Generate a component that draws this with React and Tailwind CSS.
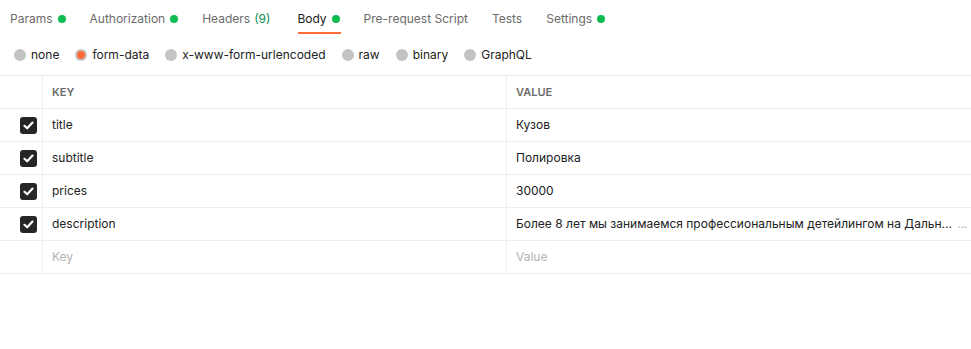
import React from 'react';

const tabs = [
    { label: 'Params', dot: true },
    { label: 'Authorization', dot: true },
    { label: 'Headers', count: '(9)' },
    { label: 'Body', dot: true, active: true },
    { label: 'Pre-request Script' },
    { label: 'Tests' },
    { label: 'Settings', dot: true },
];

const modes = ['none', 'form-data', 'x-www-form-urlencoded', 'raw', 'binary', 'GraphQL'];

const rows = [
    { key: 'title', value: 'Кузов' },
    { key: 'subtitle', value: 'Полировка' },
    { key: 'prices', value: '30000' },
    { key: 'description', value: 'Более 8 лет мы занимаемся профессиональным детейлингом на Дальн...', more: true },
];

const Check = () => (
    <div className="w-[17px] h-[17px] rounded-[3px] bg-[#262626] flex items-center justify-center">
        <svg width="11" height="9" viewBox="0 0 11 9" fill="none">
            <path d="M1.5 4.8 L4.2 7.3 L9.5 1.6" stroke="white" strokeWidth="2.2" strokeLinecap="round" strokeLinejoin="round" />
        </svg>
    </div>
);

const App = () => {
    return (
        <div className="w-[971px] h-[349px] bg-white text-[12px] text-[#212121] overflow-hidden" style={{ fontFamily: 'Inter, "Noto Sans", sans-serif' }}>
            {/* Tabs */}
            <div className="relative flex items-center h-[34px] pl-[10px] gap-[24px]">
                {tabs.map(t => (
                    <div key={t.label} className={`flex items-center gap-[5px] pt-[3px] leading-none ${t.count ? 'mr-[3px]' : ''}`}>
                        <span className={t.active ? 'text-[#212121]' : 'text-[#6b6b6b]'}>{t.label}</span>
                        {t.count && <span className="text-[#0a8f55] -ml-[1px]">{t.count}</span>}
                        {t.dot && <span className="w-[8px] h-[8px] rounded-full bg-[#0cbb52]" />}
                    </div>
                ))}
                <div className="absolute left-[298px] top-[32px] w-[43px] h-[2px] bg-[#ff6c37]" />
            </div>

            {/* Body modes */}
            <div className="flex items-center h-[41px] pl-[14px] gap-[16px]">
                {modes.map(m => (
                    <div key={m} className="flex items-center gap-[5px]">
                        {m === 'form-data' ? (
                            <span className="w-[12px] h-[12px] rounded-full bg-[#c4c4c4] flex items-center justify-center">
                                <span className="w-[8px] h-[8px] rounded-full bg-[#ff6c37]" />
                            </span>
                        ) : (
                            <span className="w-[12px] h-[12px] rounded-full bg-[#c4c4c4]" />
                        )}
                        <span className="text-[#212121]">{m}</span>
                    </div>
                ))}
            </div>

            {/* Table */}
            <div className="border-t border-[#ededed]">
                <div className="grid grid-cols-[43px_464px_1fr] h-[33px] border-b border-[#ededed] text-[11px] font-semibold text-[#6b6b6b]">
                    <div className="border-r border-[#ededed]" />
                    <div className="flex items-center pl-[9px] border-r border-[#ededed]">KEY</div>
                    <div className="flex items-center pl-[9px]">VALUE</div>
                </div>
                {rows.map(r => (
                    <div key={r.key} className="grid grid-cols-[43px_464px_1fr] h-[33px] border-b border-[#ededed]">
                        <div className="flex items-center justify-end pr-[5px] border-r border-[#ededed]">
                            <Check />
                        </div>
                        <div className="flex items-center pl-[9px] border-r border-[#ededed]">{r.key}</div>
                        <div className="flex items-center justify-between pl-[9px] pr-[4px]">
                            <span className="whitespace-nowrap">{r.value}</span>
                            {r.more && <span className="shrink-0 text-[#a6a6a6] text-[11px]">...</span>}
                        </div>
                    </div>
                ))}
                <div className="grid grid-cols-[43px_464px_1fr] h-[33px] border-b border-[#ededed] text-[#b3b3b3]">
                    <div className="border-r border-[#ededed]" />
                    <div className="flex items-center pl-[9px] border-r border-[#ededed]">Key</div>
                    <div className="flex items-center pl-[9px]">Value</div>
                </div>
            </div>
        </div>
    );
};

export default App;
